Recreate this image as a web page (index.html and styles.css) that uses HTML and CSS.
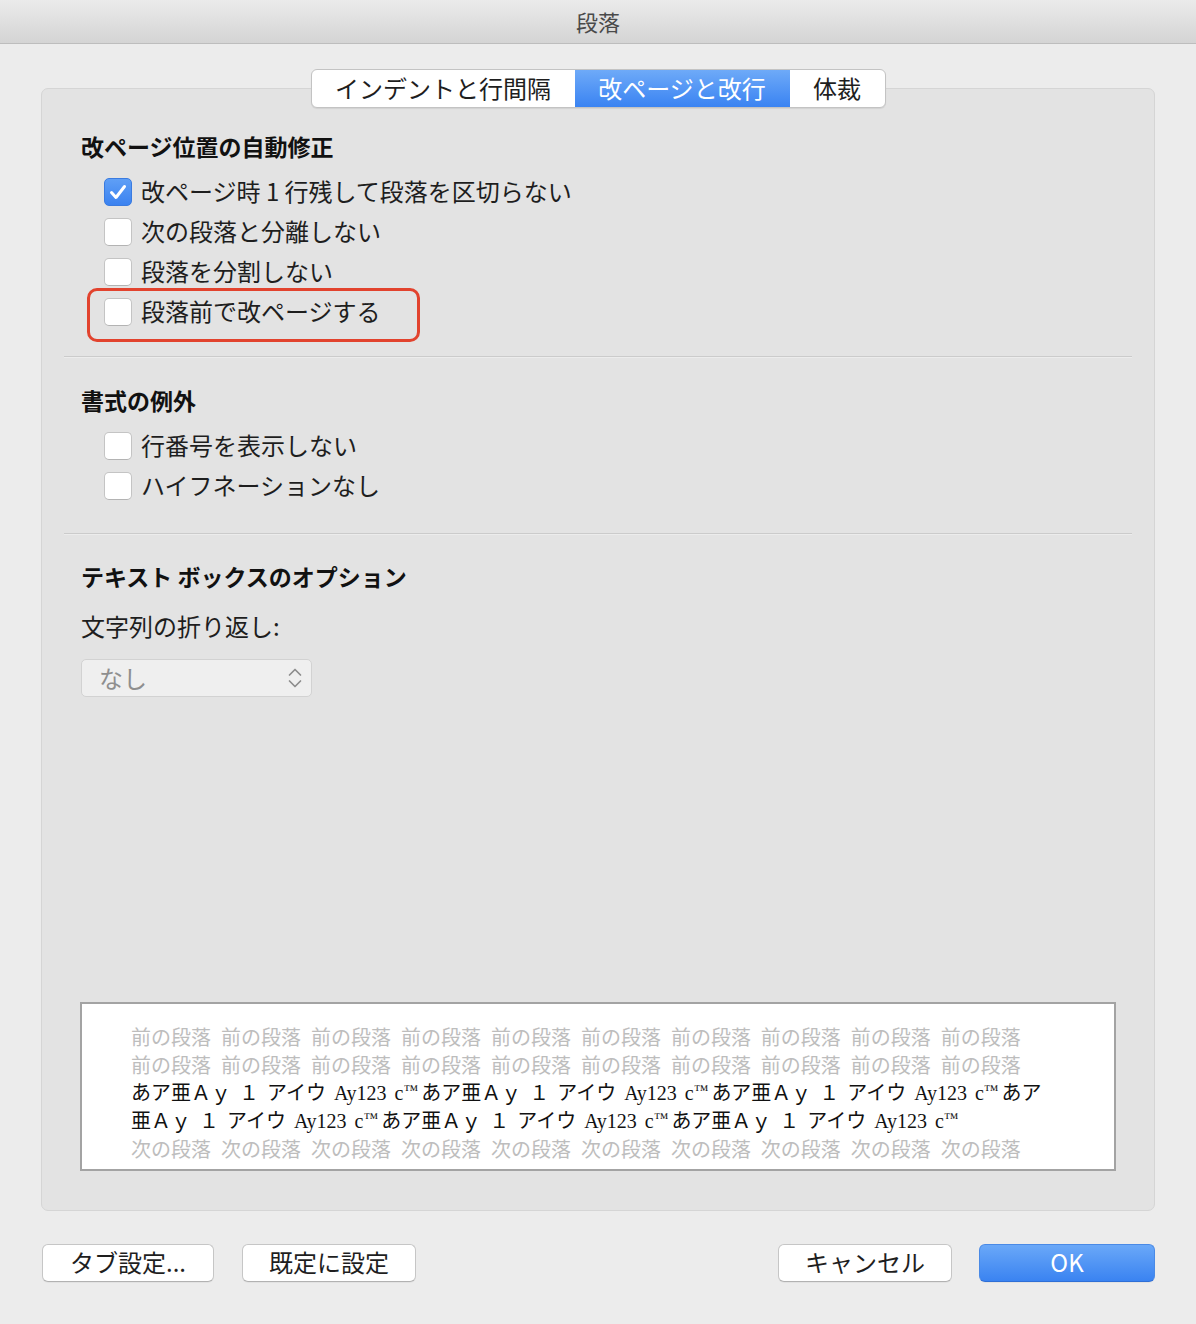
FILE: index.html
```html
<!DOCTYPE html>
<html lang="ja">
<head>
<meta charset="utf-8">
<title>段落</title>
<link rel="stylesheet" href="styles.css">
</head>
<body>
<div class="window">
  <div class="titlebar">段落</div>
  <div class="content">
    <div class="tabs">
      <div class="tabgroup">
        <div class="tab t1">インデントと行間隔</div>
        <div class="tab t2 active">改ページと改行</div>
        <div class="tab t3">体裁</div>
      </div>
    </div>
    <div class="panel">
      <section class="sec sec1">
        <h2 class="heading">改ページ位置の自動修正</h2>
        <ul class="checks">
          <li class="check"><span class="box checked"><svg viewBox="0 0 28 28" width="28" height="28"><path d="M7.5 14.5 L12 19.5 L20.5 8.5" fill="none" stroke="#fff" stroke-width="3" stroke-linecap="round" stroke-linejoin="round"/></svg></span><span class="label">改ページ時 1 行残して段落を区切らない</span></li>
          <li class="check"><span class="box"></span><span class="label">次の段落と分離しない</span></li>
          <li class="check"><span class="box"></span><span class="label">段落を分割しない</span></li>
          <li class="check hl-row"><span class="box"></span><span class="label">段落前で改ページする</span><span class="highlight"></span></li>
        </ul>
      </section>
      <div class="divider d1"></div>
      <section class="sec sec2">
        <h2 class="heading">書式の例外</h2>
        <ul class="checks">
          <li class="check"><span class="box"></span><span class="label">行番号を表示しない</span></li>
          <li class="check"><span class="box"></span><span class="label">ハイフネーションなし</span></li>
        </ul>
      </section>
      <div class="divider d2"></div>
      <section class="sec sec3">
        <h2 class="heading">テキスト ボックスのオプション</h2>
        <div class="field-label">文字列の折り返し:</div>
        <div class="select">
          <span class="select-value">なし</span>
          <svg class="select-arrows" viewBox="0 0 16 26" width="16" height="26"><path d="M2.5 10 L8 4.5 L13.5 10" fill="none" stroke="#8d8d8d" stroke-width="1.7" stroke-linecap="round" stroke-linejoin="round"/><path d="M2.5 16 L8 21.5 L13.5 16" fill="none" stroke="#8d8d8d" stroke-width="1.7" stroke-linecap="round" stroke-linejoin="round"/></svg>
        </div>
      </section>
      <div class="preview">
        <div class="pline gray">前の段落 前の段落 前の段落 前の段落 前の段落 前の段落 前の段落 前の段落 前の段落 前の段落</div>
        <div class="pline gray">前の段落 前の段落 前の段落 前の段落 前の段落 前の段落 前の段落 前の段落 前の段落 前の段落</div>
        <div class="pline sample">あア亜Ａｙ １ アイウ Ay123 c<span class="tm">™</span>あア亜Ａｙ １ アイウ Ay123 c<span class="tm">™</span>あア亜Ａｙ １ アイウ Ay123 c<span class="tm">™</span>あア</div>
        <div class="pline sample">亜Ａｙ １ アイウ Ay123 c<span class="tm">™</span>あア亜Ａｙ １ アイウ Ay123 c<span class="tm">™</span>あア亜Ａｙ １ アイウ Ay123 c<span class="tm">™</span></div>
        <div class="pline gray">次の段落 次の段落 次の段落 次の段落 次の段落 次の段落 次の段落 次の段落 次の段落 次の段落</div>
      </div>
    </div>
    <div class="footer">
      <div class="group left">
        <button class="btn b-tab">タブ設定...</button>
        <button class="btn b-default">既定に設定</button>
      </div>
      <div class="group right">
        <button class="btn b-cancel">キャンセル</button>
        <button class="btn b-ok primary">OK</button>
      </div>
    </div>
  </div>
</div>
</body>
</html>
```
FILE: styles.css
```css
html, body {
  margin: 0;
  padding: 0;
  background: #ececec;
}
body {
  width: 1196px;
  height: 1324px;
  overflow: hidden;
  font-family: "Noto Sans CJK JP", "Liberation Sans", sans-serif;
  color: #1e1e1e;
}
.window {
  width: 1196px;
  height: 1324px;
  background: #ececec;
}
.titlebar {
  height: 43px;
  line-height: 42px;
  text-align: center;
  font-size: 22px;
  color: #4a4a4a;
  background: linear-gradient(#ebebeb, #d4d4d4);
  border-bottom: 1px solid #bdbdbd;
}
.content {
  display: flex;
  flex-direction: column;
}
.tabs {
  margin-top: 25px;
  display: flex;
  justify-content: center;
  position: relative;
  z-index: 2;
}
.tabgroup {
  display: flex;
  height: 39px;
  box-sizing: border-box;
  border: 1px solid #c3c3c3;
  border-radius: 6px;
  overflow: hidden;
  background: #fff;
  box-shadow: 0 1px 1px rgba(0,0,0,0.08);
}
.tab {
  height: 37px;
  line-height: 35px;
  font-size: 24px;
  text-align: center;
  color: #1e1e1e;
}
.t1 { width: 263px; }
.t2 { width: 215px; }
.t3 { width: 95px; }
.tab.active {
  background: linear-gradient(#6eaaf8, #3a83f2);
  color: #fff;
}
.panel {
  margin: -20px 41px 0 41px;
  height: 1123px;
  box-sizing: border-box;
  background: #e3e3e3;
  border: 1px solid #d5d5d5;
  border-radius: 7px;
  padding: 0 22px;
  display: flex;
  flex-direction: column;
}
.sec {
  padding-left: 17px;
}
.sec1 { padding-top: 43px; }
.sec2 { padding-top: 29px; }
.sec3 { padding-top: 28px; }
.heading {
  margin: 0 0 10px 0;
  font-size: 23px;
  font-weight: 700;
  line-height: 28px;
  height: 30px;
  color: #111;
}
.checks {
  list-style: none;
  margin: 0;
  padding: 0 0 0 23px;
}
.check {
  height: 40px;
  display: flex;
  align-items: center;
  gap: 9px;
  font-size: 24px;
  line-height: 38px;
  color: #1e1e1e;
}
.label {
  height: 40px;
}
.hl-row {
  position: relative;
}
.highlight {
  position: absolute;
  left: -17px;
  top: -4px;
  width: 333px;
  height: 54px;
  box-sizing: border-box;
  border: 3px solid #e2432e;
  border-radius: 10px;
}
.box {
  width: 28px;
  height: 28px;
  box-sizing: border-box;
  flex: none;
  background: #fff;
  border: 1px solid #c4c4c4;
  border-bottom-color: #b3b3b3;
  border-radius: 5px;
  display: flex;
}
.box.checked {
  background: linear-gradient(#5f9ff6, #3b82f0);
  border-color: #3a7be0;
}
.box svg {
  margin: -1px;
}
.divider {
  height: 1px;
  background: #cbcbcb;
  box-shadow: 0 1px 0 #ececec;
}
.d1 { margin-top: 24px; }
.d2 { margin-top: 27px; }
.field-label {
  margin-top: 20px;
  font-size: 24px;
  line-height: 28px;
  height: 30px;
  color: #1e1e1e;
}
.select {
  margin-top: 17px;
  width: 231px;
  height: 38px;
  box-sizing: border-box;
  border: 1px solid #d2d2d2;
  border-radius: 5px;
  background: #efefef;
  display: flex;
  align-items: center;
  justify-content: space-between;
  padding: 0 8px 0 17px;
  font-size: 24px;
  color: #8e8e8e;
}
.select-value {
  line-height: 34px;
}
.select-arrows {
  display: block;
}
.preview {
  margin: auto 16px 39px 16px;
  height: 169px;
  box-sizing: border-box;
  border: 2px solid #a3a3a3;
  background: #fff;
  padding: 19px 0 0 49px;
  overflow: hidden;
}
.pline {
  height: 28px;
  line-height: 28px;
  font-size: 20px;
  white-space: nowrap;
}
.pline.gray {
  color: #bdbdbd;
  word-spacing: 5.5px;
  font-family: "Noto Sans CJK JP", sans-serif;
}
.pline.sample {
  color: #111;
  word-spacing: 3px;
  font-family: "Liberation Serif", "Noto Sans CJK JP", serif;
}
.tm {
  font-size: 15px;
  vertical-align: 5px;
  line-height: 0;
  letter-spacing: 3px;
}
.footer {
  margin-top: 33px;
  padding: 0 41px 0 42px;
  display: flex;
  justify-content: space-between;
}
.group {
  display: flex;
}
.group.left { gap: 28px; }
.group.right { gap: 27px; }
.btn {
  height: 38px;
  box-sizing: border-box;
  padding: 0 0 2px 0;
  margin: 0;
  background: #fff;
  border: 1px solid #c6c6c6;
  border-bottom-color: #b2b2b2;
  border-radius: 6px;
  font-family: "Noto Sans CJK JP", "Liberation Sans", sans-serif;
  font-size: 24px;
  line-height: 34px;
  color: #1e1e1e;
  box-shadow: 0 1px 0 rgba(0,0,0,0.04);
}
.b-tab { width: 172px; }
.b-default { width: 174px; }
.b-cancel { width: 174px; }
.b-ok { width: 176px; }
.btn.primary {
  background: linear-gradient(#6aa8f8, #3a83f1);
  border-color: #4a8ae6;
  border-bottom-color: #2f6fd6;
  color: #fff;
}
```
